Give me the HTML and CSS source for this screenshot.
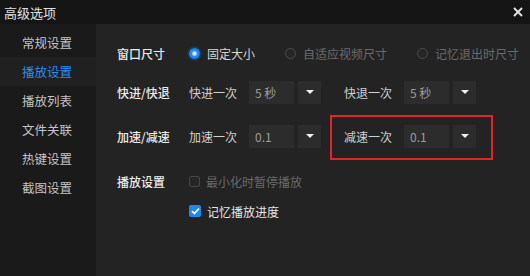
FILE: index.html
```html
<!DOCTYPE html>
<html lang="zh">
<head>
<meta charset="utf-8">
<title>高级选项</title>
<link rel="stylesheet" href="styles.css">
</head>
<body>
<div class="window">
  <div class="titlebar">
    <span class="title">高级选项</span>
    <svg class="close" width="10" height="10" viewBox="0 0 10 10"><path d="M1 1L9 9M9 1L1 9" stroke="#e6e6e6" stroke-width="1.8"/></svg>
  </div>
  <div class="body">
    <ul class="sidebar">
      <li class="nav">常规设置</li>
      <li class="nav active">播放设置</li>
      <li class="nav">播放列表</li>
      <li class="nav">文件关联</li>
      <li class="nav">热键设置</li>
      <li class="nav">截图设置</li>
    </ul>
    <div class="main">
      <div class="row row-size">
        <div class="label">窗口尺寸</div>
        <div class="options">
          <span class="opt"><span class="radio on"></span>固定大小</span>
          <span class="opt disabled"><span class="radio"></span>自适应视频尺寸</span>
          <span class="opt disabled"><span class="radio"></span>记忆退出时尺寸</span>
        </div>
      </div>
      <div class="row row-seek">
        <div class="label">快进/快退</div>
        <div class="pair">
          <span class="pair-label">快进一次</span>
          <div class="select"><span class="value">5 秒</span><span class="arrow"></span></div>
        </div>
        <div class="pair">
          <span class="pair-label">快退一次</span>
          <div class="select"><span class="value">5 秒</span><span class="arrow"></span></div>
        </div>
      </div>
      <div class="row row-speed">
        <div class="label">加速/减速</div>
        <div class="pair">
          <span class="pair-label">加速一次</span>
          <div class="select"><span class="value">0.1</span><span class="arrow"></span></div>
        </div>
        <div class="pair highlight">
          <span class="pair-label">减速一次</span>
          <div class="select"><span class="value">0.1</span><span class="arrow"></span></div>
        </div>
      </div>
      <div class="row row-play">
        <div class="label">播放设置</div>
        <span class="opt disabled"><span class="check"></span>最小化时暂停播放</span>
      </div>
      <div class="row row-resume">
        <div class="label"></div>
        <span class="opt bright"><span class="check on"><svg width="9" height="8" viewBox="0 0 9 8"><path d="M1 4.2L3.4 6.5L8 1.5" fill="none" stroke="#fff" stroke-width="1.8"/></svg></span>记忆播放进度</span>
      </div>
    </div>
  </div>
</div>
</body>
</html>
```
FILE: styles.css
```css
html, body {
  margin: 0;
  padding: 0;
  background: #232323;
}
body {
  font-family: "Noto Sans CJK SC", "Noto Sans", sans-serif;
  font-size: 12px;
  color: #d2d2d2;
}
.window {
  width: 530px;
  height: 276px;
  display: flex;
  flex-direction: column;
  overflow: hidden;
}
.titlebar {
  height: 24px;
  flex: none;
  background: #151515;
  display: flex;
  align-items: center;
  justify-content: space-between;
  padding: 0 4px 0 4px;
}
.title {
  font-size: 13px;
  color: #e2e2e2;
  line-height: 1;
}
.close {
  margin-right: 3px;
  margin-top: -1px;
}
.body {
  flex: 1;
  display: flex;
}
.sidebar {
  list-style: none;
  margin: 0;
  padding: 4px 0 0 0;
  width: 96px;
  flex: none;
  background: #1a1a1a;
}
.nav {
  height: 29px;
  line-height: 29px;
  padding-left: 22px;
  font-size: 12.5px;
  color: #c4c4c4;
}
.nav.active {
  background: #202020;
  color: #2a8ff2;
}
.main {
  flex: 1;
  background: #232323;
  padding-left: 21px;
  padding-top: 17px;
  display: flex;
  flex-direction: column;
}
.row {
  display: flex;
  align-items: center;
}
.label {
  width: 72px;
  flex: none;
  color: #ececec;
  font-weight: 500;
  font-size: 12px;
}
.row-size { height: 24px; }
.row-seek { height: 24px; margin-top: 15px; }
.row-speed { height: 24px; margin-top: 20px; }
.row-play { height: 20px; margin-top: 23px; }
.row-resume { height: 20px; margin-top: 10px; }
.options {
  display: flex;
  align-items: center;
  gap: 30px;
}
.opt {
  display: flex;
  align-items: center;
  color: #d4d4d4;
}
.opt.disabled { color: #6a6a6a; }
.opt.bright { color: #e6e6e6; }
.radio {
  width: 11px;
  height: 11px;
  border-radius: 50%;
  box-sizing: border-box;
  border: 1px solid #4c4c4c;
  background: #262626;
  margin-right: 7px;
  position: relative;
}
.radio.on {
  border: none;
  background: radial-gradient(circle, #e8f4ff 0, #bfe0ff 1.5px, #2a8ff2 3px, #1677e6 5.5px);
  box-shadow: 0 0 3px rgba(42, 143, 242, 0.7);
}
.pair {
  display: flex;
  align-items: center;
}
.pair + .pair { margin-left: 23px; }
.pair-label {
  width: 60px;
  color: #d0d0d0;
}
.select {
  display: flex;
  gap: 4px;
  height: 23px;
}
.value {
  width: 45px;
  background: #2c2c2c;
  color: #9c9c9c;
  box-sizing: border-box;
  padding-left: 6px;
  line-height: 23px;
}
.arrow {
  width: 23px;
  background: #2c2c2c;
  display: flex;
  align-items: center;
  justify-content: center;
}
.arrow::before {
  content: "";
  width: 0;
  height: 0;
  border-left: 4px solid transparent;
  border-right: 4px solid transparent;
  border-top: 4px solid #f0f0f0;
}
.highlight { position: relative; }
.highlight::after {
  content: "";
  position: absolute;
  top: -10px;
  bottom: -12px;
  left: -14px;
  right: -17px;
  border: 2px solid #e0262b;
}
.check {
  width: 11px;
  height: 11px;
  box-sizing: border-box;
  border: 1px solid #474747;
  background: #262626;
  border-radius: 2px;
  margin-right: 6px;
  display: flex;
  align-items: center;
  justify-content: center;
}
.check.on {
  border: none;
  background: #1e88f0;
  width: 12px;
  height: 12px;
}
```
